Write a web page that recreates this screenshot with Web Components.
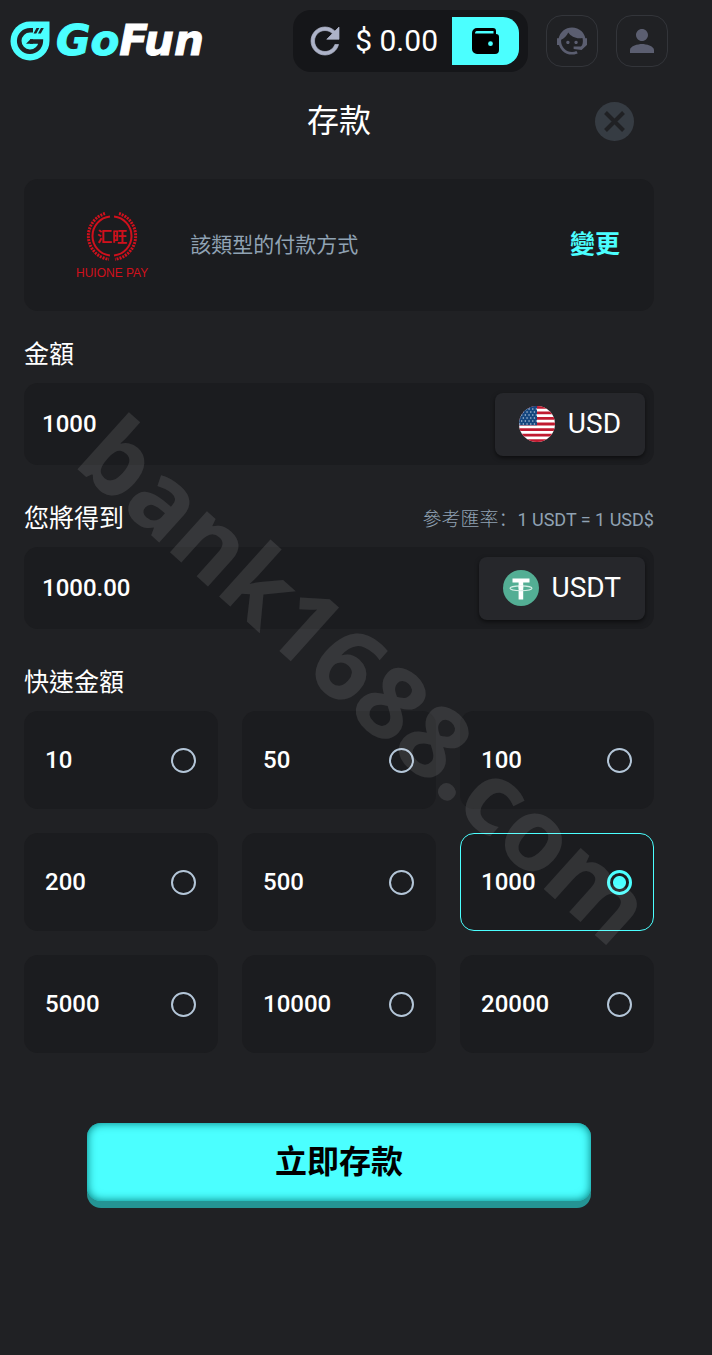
<!DOCTYPE html>
<html lang="zh-Hant">
<head>
  <meta charset="utf-8">
  <meta name="viewport" content="width=device-width, initial-scale=1">
  <title>GoFun</title>
  <style>
    :root {
      --bg: #202124;
      --card: #1b1c1f;
      --accent: #4bffff;
      --muted: #90a2b3;
    }

    body {
      margin: 0;
      min-height: 100vh;
      position: relative;
      overflow-x: hidden;
      background: var(--bg);
      color: #fff;
      font-family: Roboto, "Noto Sans CJK TC", sans-serif;
    }
  </style>
</head>
<body>
  <deposit-app></deposit-app>
  <water-mark>bank1688.com</water-mark>

  <script>
    const define = (name, html, setup) => {
      const tmplt = document.createElement('template');
      tmplt.innerHTML = `
        <style>
          * { box-sizing: border-box; }
          button { margin: 0; padding: 0; border: 0; background: none; font: inherit; color: inherit; cursor: pointer; }
          svg { display: block; flex: none; }
        </style>
        ${html}`;

      window.customElements.define(name, class extends HTMLElement {
        constructor() {
          super();
          this.attachShadow({ mode: 'open' }).appendChild(tmplt.content.cloneNode(true));
        }

        connectedCallback() {
          if (setup) setup(this, this.shadowRoot);
        }
      });
    };

    define('brand-logo', `
      <style>
        :host { display: block; }
        a { display: flex; align-items: center; gap: 6px; color: #fff; text-decoration: none;
            font: italic bold 42px/48px "DejaVu Sans", sans-serif; -webkit-text-stroke: 1px currentColor; }
        b { color: var(--accent); }
      </style>
      <a href="#" aria-label="GoFun">
        <svg width="40" height="40" viewBox="0 0 40 40" fill="none">
          <path d="M20 .5H39.5V20A19.5 19.5 0 1 1 20 .5Z" fill="#4bffff"/>
          <path d="M23 9.200H20A10.800 10.800 0 1 0 30.800 20.500H20" stroke="#202124" stroke-width="4.600"/>
          <path d="M16 22.800L20.500 18.200H23V22.800Z" fill="#202124"/>
          <path d="M26.500 7H29.300L26.300 12.500H23.500ZM31 7H33.800L30.800 12.500H28Z" fill="#202124"/>
        </svg>
        <span><b>Go</b>Fun</span>
      </a>`);

    define('wallet-balance', `
      <style>
        :host { display: flex; align-items: center; height: 62px; padding: 0 9px 0 11px; border-radius: 18px; background: #151619; }
        .amount { margin: 0 14px 0 9px; font-size: 30px; line-height: 40px; white-space: nowrap; }
        .wallet { display: grid; place-items: center; width: 67px; height: 48px; border-radius: 0 16px 16px 0; background: var(--accent); }
      </style>
      <button aria-label="重新整理">
        <svg width="42" height="42" viewBox="0 0 24 24" fill="#adb3c8"><path d="M17.65 6.35C16.2 4.9 14.21 4 12 4c-4.42 0-7.99 3.58-7.99 8s3.57 8 7.99 8c3.73 0 6.84-2.55 7.73-6h-2.08c-.82 2.33-3.04 4-5.65 4-3.31 0-6-2.69-6-6s2.69-6 6-6c1.66 0 3.14.69 4.22 1.78L13 11h7V4l-2.35 2.35z" stroke="#adb3c8" stroke-width=".4"/></svg>
      </button>
      <span class="amount"><slot></slot></span>
      <button class="wallet" aria-label="錢包">
        <svg width="27" height="26" viewBox="0 0 27 26">
          <path d="M5 0H21A3 3 0 0 1 24 3V6A3 3 0 0 1 27 9V22A4 4 0 0 1 23 26H5A5 5 0 0 1 0 21V5A5 5 0 0 1 5 0Z"/>
          <path d="M3 5.5C3 3.5 4 3 5.500 3H21.500V5.500Z" fill="#4bffff"/>
          <circle cx="18.500" cy="15.700" r="2.400" fill="#4bffff"/>
        </svg>
      </button>`);

    define('icon-button', `
      <style>
        :host { display: block; }
        button { display: grid; place-items: center; width: 52px; height: 52px; border: 1px solid #33353a; border-radius: 16px; color: #5b5e70; }
      </style>
      <button><slot></slot></button>`, (host, root) => {
        root.querySelector('button').setAttribute('aria-label', host.getAttribute('label'));
      });

    define('app-header', `
      <style>
        :host { display: flex; align-items: center; gap: 18px; padding: 10px; }
        brand-logo { margin-right: auto; }
      </style>
      <brand-logo></brand-logo>
      <wallet-balance>$ 0.00</wallet-balance>
      <icon-button label="客服">
        <svg width="36" height="36" viewBox="0 0 24 24" fill="currentColor"><path d="M18.720,14.760C19.070,13.910 19.260,13 19.260,12C19.260,11.280 19.150,10.590 18.960,9.950C18.310,10.100 17.630,10.180 16.920,10.180C13.860,10.180 11.150,8.670 9.500,6.340C8.610,8.500 6.910,10.260 4.770,11.220C4.730,11.470 4.730,11.740 4.730,12A7.270,7.270 0 0,0 12,19.270C13.050,19.270 14.060,19.040 14.970,18.630C15.540,19.720 15.800,20.260 15.780,20.260C14.140,20.810 12.870,21.080 12,21.080C9.580,21.080 7.270,20.130 5.570,18.420C4.530,17.380 3.760,16.110 3.330,14.730H2V10.180H3.090C3.930,6.040 7.600,2.920 12,2.920C14.400,2.920 16.710,3.870 18.420,5.570C19.690,6.840 20.540,8.450 20.890,10.180H22V14.730H21.940L18.380,18L13.080,17.400V15.730H17.910L18.720,14.760M9.270,11.770A1.140,1.140 0 1,1 9.260,11.770ZM14.720,11.770A1.140,1.140 0 1,1 14.710,11.770Z"/></svg>
      </icon-button>
      <icon-button label="帳戶">
        <svg width="36" height="36" viewBox="0 0 24 24" fill="currentColor"><path d="M12 12c2.210 0 4-1.790 4-4s-1.790-4-4-4-4 1.790-4 4 1.790 4 4 4zm0 2c-2.670 0-8 1.340-8 4v2h16v-2c0-2.660-5.330-4-8-4z"/></svg>
      </icon-button>`);

    define('page-title', `
      <style>
        :host { display: grid; grid-template-columns: 1fr auto 1fr; align-items: center; padding: 19px 20px 37px; }
        h1 { grid-column: 2; margin: 0; font-size: 32px; font-weight: 400; line-height: 41px; }
        button { justify-self: end; }
      </style>
      <h1><slot></slot></h1>
      <button aria-label="關閉">
        <svg width="39" height="39" viewBox="0 0 39 39">
          <circle cx="19.500" cy="19.500" r="19.500" fill="#363c43"/>
          <path d="M10.500 10.500L28.500 28.500M28.500 10.500L10.500 28.500" stroke="#202124" stroke-width="4"/>
        </svg>
      </button>`);

    define('payment-method', `
      <style>
        :host { display: flex; align-items: center; min-height: 132px; padding: 0 34px 0 52px; border-radius: 14px; background: var(--card); }
        .brand { display: flex; flex-direction: column; align-items: center; color: #d0101c; font: 12px/14px "Liberation Sans", sans-serif; }
        .emblem { display: grid; place-items: center; margin-bottom: 4px; }
        .emblem > * { grid-area: 1 / 1; }
        .emblem span { font: bold 15px/20px "Noto Sans CJK SC", sans-serif; }
        p { flex: 1; margin: 0 0 0 42px; color: var(--muted); font-size: 21px; line-height: 32px; }
        button { color: var(--accent); font-size: 25px; font-weight: 700; line-height: 36px; }
      </style>
      <div class="brand">
        <div class="emblem">
          <svg width="52" height="52" viewBox="-26 -26 52 52" fill="none" stroke="#d0101c">
            <path d="M-2 -19.400A19.500 19.500 0 0 0 -2 19.400" stroke-width="2"/>
            <path d="M2 -19.400A19.500 19.500 0 0 1 2 19.400" stroke-width="2"/>
            <path d="M-7 -22.500A23.500 23.500 0 0 0 -3 23.300M7 -22.500A23.500 23.500 0 0 1 3 23.300" stroke-width="3" stroke-dasharray="2 1"/>
          </svg>
          <span>汇旺</span>
        </div>
        <span>HUIONE PAY</span>
      </div>
      <p><slot></slot></p>
      <button>變更</button>`);

    // Label row above, value on the left and the currency button on the right.
    define('amount-field', `
      <style>
        :host { display: block; }
        .head { display: flex; align-items: center; justify-content: space-between; margin-bottom: 8px; }
        label { font-size: 25px; line-height: 40px; }
        .box { display: flex; align-items: center; height: 82px; padding: 0 9px 0 18px; border-radius: 14px; background: var(--card); }
        input { flex: 1; min-width: 0; padding: 0; border: 0; outline: 0; background: none; color: #fff; font: 500 24px/32px Roboto, sans-serif; }
        button { display: flex; align-items: center; gap: 13px; height: 63px; padding: 0 24px; border-radius: 8px;
                 background: #26272b; box-shadow: 0 2px 4px #0008; font-size: 28px; line-height: 36px; }
      </style>
      <div class="head"><label for="value"></label><slot name="note"></slot></div>
      <div class="box">
        <input id="value" inputmode="decimal">
        <button><slot name="icon"></slot><span></span></button>
      </div>`, (host, root) => {
        const input = root.querySelector('input');
        root.querySelector('label').textContent = host.getAttribute('label');
        root.querySelector('button span').textContent = host.getAttribute('currency');
        input.value = host.getAttribute('value');
        input.readOnly = host.hasAttribute('readonly');
      });

    define('exchange-rate', `
      <style>
        :host { color: var(--muted); font: 300 19px/28px "Noto Sans CJK SC", sans-serif; }
        span { font: 400 18px/28px Roboto, sans-serif; }
      </style>
      <bdi lang="zh-Hans">參考匯率：</bdi><span><slot></slot></span>`);

    define('flag-usd', `
      <style>:host { display: block; }</style>
      <svg width="36" height="36" viewBox="0 0 36 36">
        <clipPath id="round"><circle cx="18" cy="18" r="18"/></clipPath>
        <g clip-path="url(#round)">
          <path d="M0 0H36V36H0Z" fill="#fff"/>
          <path d="M0 1.400H36M0 6.920H36M0 12.460H36M0 18H36M0 23.540H36M0 29.070H36M0 34.600H36" stroke="#c01a30" stroke-width="2.770"/>
          <path d="M0 0H18V19.300H0Z" fill="#15477f"/>
          <path d="M2 3H18M0 6H18M2 9H18M0 12H18M2 15H18M0 18H18" stroke="#9fb6cf" stroke-width="1.300" stroke-dasharray="1.300 2.400"/>
        </g>
      </svg>`);

    define('coin-usdt', `
      <style>:host { display: block; }</style>
      <svg width="36" height="36" viewBox="0 0 36 36">
        <circle cx="18" cy="18" r="18" fill="#53ae94"/>
        <path d="M9.500 8.500H26.500V12.600H20.200V29.500H15.600V12.600H9.500Z" fill="#fff"/>
        <ellipse cx="18" cy="18.300" rx="11" ry="2.400" fill="none" stroke="#d5eee6" stroke-width="1.100"/>
        <path d="M15.600 17H20.200" stroke="#fff" stroke-width="3"/>
      </svg>`);

    define('quick-amounts', `
      <style>
        :host { display: block; }
        fieldset { min-width: 0; margin: 0; padding: 0; border: 0; }
        legend { padding: 0; margin-bottom: 8px; font-size: 25px; line-height: 40px; }
        .grid { display: grid; grid-template-columns: repeat(3, 1fr); gap: 24px; }
        label { display: flex; align-items: center; justify-content: space-between; height: 98px; padding: 0 21px 0 20px;
                border: 1px solid transparent; border-radius: 14px; background: var(--card); font-size: 24px; font-weight: 500; cursor: pointer; }
        label:has(:checked) { border-color: var(--accent); }
        input { appearance: none; width: 25px; height: 25px; margin: 0; border: 2px solid #b4c6d8; border-radius: 50%; }
        input:checked { border: 3px solid var(--accent); background: radial-gradient(circle, var(--accent) 6px, transparent 7px); }
      </style>
      <fieldset>
        <legend><slot></slot></legend>
        <div class="grid"></div>
      </fieldset>`, (host, root) => {
        const selected = host.getAttribute('selected');
        root.querySelector('.grid').innerHTML = host.getAttribute('options').split(' ').map(n => `
          <label>${n}<input type="radio" name="amount" value="${n}" ${n === selected ? 'checked' : ''}></label>`).join('');
        root.addEventListener('change', e => {
          host.dispatchEvent(new CustomEvent('amountPicked', { detail: e.target.value }));
        });
      });

    define('submit-button', `
      <style>
        :host { display: block; }
        button { display: block; width: 80%; height: 78px; margin: 0 auto; border-radius: 14px; background: var(--accent); color: #000;
                 box-shadow: 0 7px 0 #249494, inset 0 0 10px #077; font-size: 32px; font-weight: 700; line-height: 48px; }
      </style>
      <button><slot></slot></button>`);

    define('water-mark', `
      <style>
        :host { position: absolute; inset: 0; display: grid; place-content: center; padding-left: 24px; overflow: hidden; pointer-events: none; }
        span { color: rgba(255, 255, 255, .1); font: 700 101px/140px "Noto Sans", sans-serif; transform: rotate(42deg); }
      </style>
      <span><slot></slot></span>`);

    define('deposit-app', `
      <style>
        :host { display: block; padding-right: 34px; }
        main { padding: 0 24px 64px; }
        #pay { margin-top: 24px; }
        #get { margin-top: 34px; }
        quick-amounts { margin-top: 34px; }
        submit-button { margin-top: 70px; }
      </style>
      <app-header></app-header>
      <main>
        <page-title>存款</page-title>
        <payment-method>該類型的付款方式</payment-method>
        <amount-field id="pay" label="金額" currency="USD" value="1000"><flag-usd slot="icon"></flag-usd></amount-field>
        <amount-field id="get" label="您將得到" currency="USDT" value="1000.00" readonly>
          <exchange-rate slot="note">1 USDT = 1 USD$</exchange-rate>
          <coin-usdt slot="icon"></coin-usdt>
        </amount-field>
        <quick-amounts options="10 50 100 200 500 1000 5000 10000 20000" selected="1000">快速金額</quick-amounts>
        <submit-button>立即存款</submit-button>
      </main>`, (host, root) => {
        const value = id => root.querySelector(id).shadowRoot.querySelector('input');
        root.querySelector('quick-amounts').addEventListener('amountPicked', e => {
          value('#pay').value = e.detail;
          value('#get').value = Number(e.detail).toFixed(2);
        });
      });
  </script>
</body>
</html>
